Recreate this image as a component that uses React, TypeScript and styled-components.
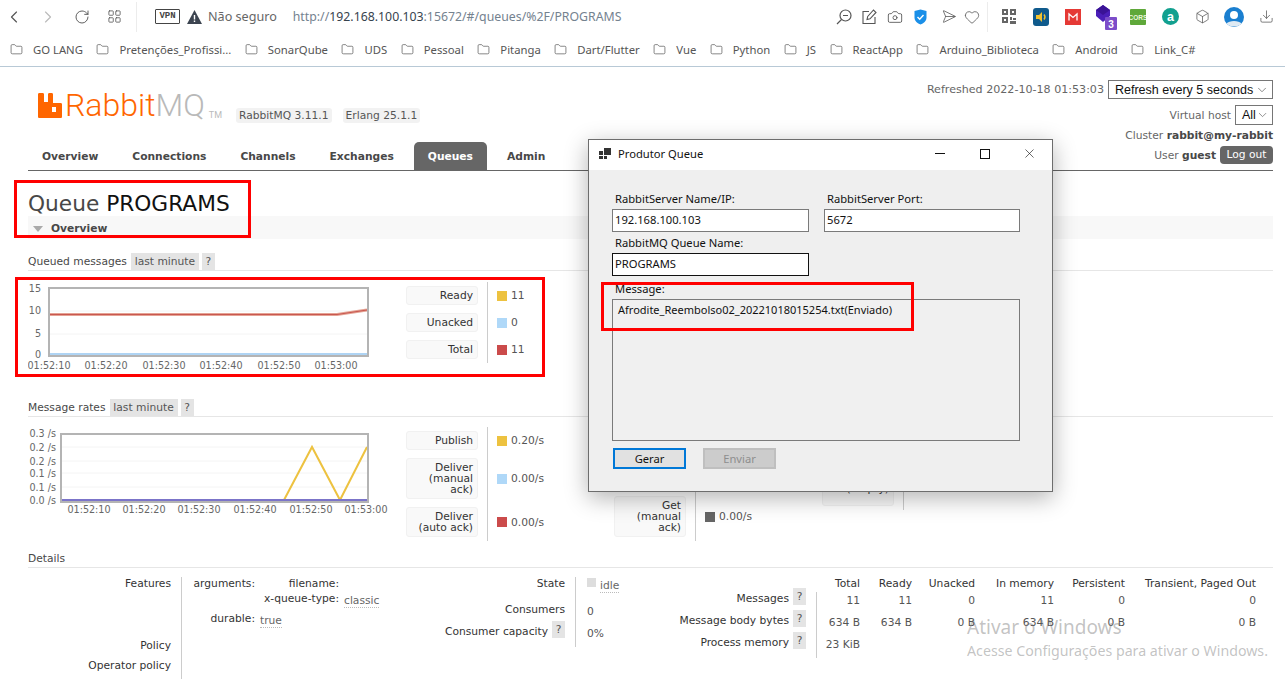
import React from 'react'
import styled, { createGlobalStyle } from 'styled-components'
import {
  Box,
  Camera,
  ChevronDown,
  ChevronLeft,
  ChevronRight,
  Download,
  Folder,
  Heart,
  LayoutGrid,
  RotateCw,
  Send,
  X,
} from 'lucide-react'

const GlobalStyle = createGlobalStyle`
  html, body {
    margin: 0;
    height: 680px;
    overflow: hidden;
    background: #fff;
  }
  * { box-sizing: border-box; }
`

const verdana = `"DejaVu Sans", Verdana, sans-serif`
const segoe = `"Noto Sans", "Open Sans", sans-serif`

const Page = styled.div`
  position: relative;
  width: 1285px;
  height: 680px;
  overflow: hidden;
  font-family: ${verdana};
  font-size: 10.7px;
  color: #484848;
`

/* browser chrome */
const TopBar = styled.div`
  display: flex;
  align-items: center;
  height: 33px;
  font-family: ${segoe};
  color: #555;
`
const ToolSlot = styled.div<{ $w: number }>`
  display: flex;
  align-items: center;
  justify-content: center;
  flex: 0 0 ${(p) => p.$w}px;
  height: 33px;
`
const Separator = styled.div<{ $l: number; $r: number }>`
  width: 1px;
  height: 30px;
  background: #ececec;
  margin: 0 ${(p) => p.$r}px 0 ${(p) => p.$l}px;
`
const VpnBadge = styled.div`
  width: 25px;
  height: 15px;
  border: 1px solid #444;
  border-radius: 1px;
  font: 9px/13px "Liberation Mono", monospace;
  font-weight: 700;
  text-align: center;
  color: #444;
  margin-right: 7px;
`
const NotSecure = styled.span`
  font-size: 12.6px;
  color: #666;
  margin-left: 6px;
  margin-right: 16px;
`
const Url = styled.div`
  font-size: 12.3px;
  color: #74828f;
  white-space: nowrap;
  b { font-weight: 400; color: #36424d; }
`
const ToolIcons = styled.div`
  display: flex;
  align-items: center;
  margin-left: auto;
  padding-right: 3px;
`
const Bookmarks = styled.div`
  display: flex;
  align-items: center;
  gap: 13.5px;
  height: 34px;
  padding-left: 10px;
  border-bottom: 1px solid #b8c9d6;
  font-family: ${segoe};
  font-size: 11.3px;
  color: #555;
`
const Bookmark = styled.div`
  display: flex;
  align-items: center;
  gap: 10px;
  white-space: nowrap;
  svg { flex: none; }
`

/* rabbit header */
const Header = styled.header`
  display: flex;
  justify-content: space-between;
  height: 104px;
  margin: 0 12px 0 28px;
  border-bottom: 1px solid #666;
`
const Brand = styled.div`
  display: flex;
  flex-direction: column;
  padding-top: 26px;
`
const LogoRow = styled.div`
  display: flex;
  align-items: flex-start;
  height: 49px;
  padding-left: 10px;
`
const LogoMark = styled.svg`
  width: 24px;
  height: 25px;
  margin-right: 3px;
`
const LogoWord = styled.div`
  font-family: Roboto, sans-serif;
  font-weight: 300;
  font-size: 32px;
  line-height: 25px;
  color: #f60;
  span { color: #b9b9b9; }
`
const LogoTm = styled.div`
  font-family: Roboto, sans-serif;
  font-size: 9px;
  color: #bbb;
  margin: 17px 14px 0 4px;
`
const Version = styled.div`
  height: 15px;
  margin-top: 15px;
  margin-right: 11px;
  padding: 0 3px;
  background: #f2f2f2;
  border-radius: 3px;
  line-height: 15px;
  white-space: nowrap;
  color: #555;
`
const Tabs = styled.nav`
  display: flex;
  gap: 6px;
  height: 28px;
`
const Tab = styled.div<{ $active?: boolean }>`
  padding: 0 14px;
  line-height: 30px;
  font-weight: 700;
  border-radius: 5px 5px 0 0;
  background: ${(p) => (p.$active ? '#666' : 'transparent')};
  color: ${(p) => (p.$active ? '#fff' : '#484848')};
`
const Status = styled.div`
  display: flex;
  flex-direction: column;
  align-items: flex-end;
  padding-top: 13px;
`
const StatusRow = styled.div<{ $top?: number }>`
  display: flex;
  align-items: center;
  justify-content: flex-end;
  gap: 4px;
  margin-top: ${(p) => p.$top ?? 0}px;
  white-space: nowrap;
  color: #666;
  b { color: #484848; }
`
const Refreshed = styled.span`
  font-size: 11.1px;
`
const SelectBox = styled.div<{ $w: number }>`
  display: flex;
  align-items: center;
  justify-content: space-between;
  width: ${(p) => p.$w}px;
  height: ${(p) => (p.$w > 100 ? 19 : 20)}px;
  padding: 0 3px 0 6px;
  border: 1px solid #767676;
  font-family: "Liberation Sans", sans-serif;
  font-size: 12.5px;
  color: #111;
`
const LogOut = styled.div`
  width: 53px;
  height: 18px;
  line-height: 18px;
  text-align: center;
  background: #666;
  color: #fff;
  border-radius: 4px;
`

/* queue page */
const Main = styled.main`
  margin: 0 12px 0 28px;
`
const Title = styled.h1`
  margin: 0;
  height: 45px;
  padding-top: 20px;
  font-size: 21.7px;
  font-weight: 400;
  line-height: 26px;
  color: #484848;
  b { font-weight: 400; color: #111; }
`
const SectionBar = styled.div`
  display: flex;
  align-items: center;
  gap: 8px;
  height: 23px;
  padding: 2px 0 0 5px;
  background: #f8f8f8;
  font-weight: 700;
  color: #484848;
`
const Caret = styled.i`
  width: 0;
  height: 0;
  border-left: 5px solid transparent;
  border-right: 5px solid transparent;
  border-top: 6px solid #aaa;
`
const SubHeading = styled.div<{ $top: number }>`
  display: flex;
  align-items: center;
  gap: 3px;
  height: 18px;
  margin-top: ${(p) => p.$top}px;
  border-bottom: 1px solid #e6e6e6;
  padding-bottom: 1px;
  white-space: nowrap;
`
const Help = styled.span`
  display: inline-block;
  height: 17px;
  min-width: 13px;
  padding: 0 3px;
  line-height: 17px;
  text-align: center;
  background: #e4e4e4;
  color: #555;
`
const Range = styled(Help)`
  width: 68px;
  padding: 0;
  margin-left: 1px;
`
const ChartRow = styled.div<{ $h: number; $top: number }>`
  display: flex;
  height: ${(p) => p.$h}px;
  margin-top: ${(p) => p.$top}px;
`
const Plot = styled.svg`
  flex: 0 0 378px;
  height: 114px;
  font-family: ${verdana};
  font-size: 9.6px;
  fill: #666;
`
const LegendCol = styled.div<{ $pad?: number }>`
  display: flex;
  flex-direction: column;
  flex: 0 0 208px;
  padding-top: ${(p) => p.$pad ?? 0}px;
`
const LegendRow = styled.div`
  display: flex;
`
const LegendLabel = styled.div<{ $tail?: number }>`
  width: 72px;
  margin: 4px 0;
  padding: 3px 4px ${(p) => p.$tail ?? 3}px;
  line-height: 11px;
  text-align: right;
  background: #f9f9f9;
  border: 1px solid #f1f1f1;
  border-radius: 3px;
  color: #333;
`
const LegendValue = styled.div`
  display: flex;
  align-items: center;
  gap: 4px;
  margin-left: 9px;
  padding-left: 9px;
  border-left: 1px solid #ccc;
  color: #555;
`
const Swatch = styled.i<{ $c: string }>`
  width: 10px;
  height: 10px;
  background: ${(p) => p.$c};
`

/* details */
const DetailsRow = styled.div`
  display: flex;
  margin-top: 9px;
`
const DetailBlock = styled.div<{ $w: number; $label: number; $top?: number }>`
  display: grid;
  grid-template-columns: ${(p) => p.$label}px 1fr;
  align-content: start;
  flex: 0 0 ${(p) => p.$w}px;
  margin-top: ${(p) => p.$top ?? 0}px;
`
const DetailLabel = styled.div<{ $h: number; $row?: number }>`
  display: flex;
  justify-content: flex-end;
  align-items: flex-start;
  gap: 4px;
  height: ${(p) => p.$h}px;
  padding: 0 10px 0 0;
  color: #333;
  white-space: nowrap;
  grid-row: ${(p) => p.$row ?? 'auto'};
  span { margin-top: -4px; }
`
const DetailValue = styled.div<{ $top?: number }>`
  border-left: 1px solid #ccc;
  padding: ${(p) => p.$top ?? 0}px 0 0 11px;
  color: #555;
`
const CountsCell = styled.div`
  grid-row: 1 / 4;
  grid-column: 2;
  border-left: 1px solid #ccc;
  color: #555;
`
const KeyValues = styled.dl<{ $key: number }>`
  display: grid;
  grid-template-columns: ${(p) => p.$key}px 1fr;
  column-gap: 5px;
  align-items: baseline;
  margin: 0;
  dd { margin: 0; }
`
const Key = styled.dt<{ $top?: number }>`
  margin-top: ${(p) => p.$top ?? 0}px;
  text-align: right;
  color: #333;
  white-space: nowrap;
`
const Val = styled.dd<{ $top?: number }>`
  margin-top: ${(p) => p.$top ?? 0}px !important;
`
const Dotted = styled.span`
  position: relative;
  top: 2px;
  border-bottom: 1px dotted #bbb;
  color: #666;
`
const IdleSwatch = styled.i`
  display: inline-block;
  width: 9px;
  height: 9px;
  margin-right: 4px;
  background: #ddd;
`
const CountTable = styled.div`
  display: grid;
  grid-template-columns: 43px 52px 63px 79px 71px 131px;
  margin-top: -15px;
  text-align: right;
  white-space: nowrap;
`
const CountHead = styled.div`
  height: 15px;
  color: #333;
`
const CountCell = styled.div`
  height: 22px;
  padding-top: 2px;
  color: #555;
`

/* the desktop window over the browser */
const AppWindow = styled.section`
  position: absolute;
  left: 588px;
  top: 139px;
  width: 465px;
  height: 353px;
  border: 1px solid #6d6d6d;
  background: #efefef;
  box-shadow: 0 6px 22px rgba(0, 0, 0, 0.3);
  font-family: ${segoe};
  font-size: 11.2px;
  color: #111;
`
const WindowTitle = styled.div`
  display: flex;
  align-items: center;
  height: 30px;
  padding-left: 10px;
  padding-bottom: 3px;
  background: #fff;
  gap: 7px;
`
const WindowButtons = styled.div`
  display: flex;
  align-items: center;
  margin-left: auto;
`
const WindowButton = styled.div`
  display: flex;
  align-items: center;
  justify-content: center;
  width: 45px;
  height: 27px;
`
const MinLine = styled.i`
  width: 10px;
  height: 1px;
  background: #111;
`
const MaxBox = styled.i`
  width: 10px;
  height: 10px;
  border: 1px solid #111;
`
const WindowBody = styled.div`
  display: grid;
  grid-template-columns: 197px 196px;
  column-gap: 15px;
  padding: 21px 0 0 23px;
`
const FieldLabel = styled.div<{ $wide?: boolean }>`
  grid-column: ${(p) => (p.$wide ? '1 / 3' : 'auto')};
  height: ${(p) => (p.$wide ? 20 : 18)}px;
  padding: ${(p) => (p.$wide ? 2 : 0)}px 0 0 3px;
  line-height: 16px;
`
const Field = styled.div<{ $focus?: boolean }>`
  height: 23px;
  margin-bottom: 3px;
  padding-left: 2px;
  line-height: 20px;
  background: #fff;
  border: 1px solid ${(p) => (p.$focus ? '#111' : '#7a7a7a')};
`
const MessageBox = styled.div`
  grid-column: 1 / 3;
  height: 142px;
  padding: 2px 5px;
  font-size: 11px;
  line-height: 16px;
  border: 1px solid #7a7a7a;
  background: #f0f0f0;
`
const WindowActions = styled.div`
  grid-column: 1 / 3;
  display: flex;
  gap: 17px;
  margin: 7px 0 0 1px;
`
const Push = styled.div<{ $disabled?: boolean }>`
  width: 73px;
  height: 21px;
  line-height: 17px;
  text-align: center;
  background: ${(p) => (p.$disabled ? '#ccc' : '#e1e1e1')};
  border: 2px solid ${(p) => (p.$disabled ? '#bfbfbf' : '#0078d7')};
  color: ${(p) => (p.$disabled ? '#8e8e8e' : '#111')};
`

/* overlays */
const Callout = styled.div<{ $l: number; $t: number; $w: number; $h: number }>`
  position: absolute;
  left: ${(p) => p.$l}px;
  top: ${(p) => p.$t}px;
  width: ${(p) => p.$w}px;
  height: ${(p) => p.$h}px;
  border: 3px solid #f00;
`
const Watermark = styled.div`
  position: absolute;
  left: 967px;
  top: 616px;
  font-family: ${segoe};
  color: rgba(110, 110, 110, 0.42);
  white-space: nowrap;
  p { margin: 3px 0 0; font-size: 14.2px; line-height: 20px; }
  h2 { margin: 0; font-size: 19px; line-height: 22px; font-weight: 400; }
`

const Gray = '#555'

function SearchMinus() {
  return (
    <svg width="16" height="16" viewBox="0 0 16 16" fill="none" stroke={Gray} strokeWidth="1.2">
      <circle cx="9.5" cy="6.5" r="5.5" />
      <path d="M5.5 10.5 1 15M7 6.5h5" />
    </svg>
  )
}

function PenBox() {
  return (
    <svg width="15" height="15" viewBox="0 0 15 15" fill="none" stroke={Gray} strokeWidth="1.1">
      <path d="M7 2.5H1v12h12V8" />
      <path d="m5 10.5.7-3L11.5 1l2.5 2.5-6 6.3-3 .7Z" />
    </svg>
  )
}

function ShieldCheck() {
  return (
    <svg width="13" height="16" viewBox="0 0 13 16">
      <path d="M6.500.5 12.500 2v6.500c0 3.500-3 6-6 7-3-1-6-3.500-6-7V2Z" fill="#1a8fe8" />
      <path d="m3.500 8 2.200 2.200L9.500 6" fill="none" stroke="#fff" strokeWidth="1.4" />
    </svg>
  )
}

function QrTile() {
  return (
    <svg width="14" height="16" viewBox="0 0 14 16" fill="#666">
      <path d="M0 0h6v6H0zM2 2v2h2V2zM8 0h6v6H8zm2 2v2h2V2zM0 8h6v6H0zm2 2v2h2v-2zM8 8h2v3H8zM11 9h3v2h-3zM8 12h6v3H8z" fillRule="evenodd" />
    </svg>
  )
}

function SpeakerTile() {
  return (
    <svg width="16" height="18" viewBox="0 0 16 18">
      <rect width="16" height="18" rx="3" fill="#0f5a8c" />
      <path d="M3 7h3l3-3v10l-3-3H3Z" fill="#f2c230" />
      <path d="M11 6.500c1.200 1.500 1.200 3.500 0 5" fill="none" stroke="#f2c230" strokeWidth="1.400" />
    </svg>
  )
}

function MailTile() {
  return (
    <svg width="16" height="16" viewBox="0 0 16 16">
      <rect width="16" height="16" fill="#e53935" />
      <path d="M4 11.500V5l4 3.500L12 5v6.500" fill="none" stroke="#fff" strokeWidth="1.300" />
    </svg>
  )
}

function GemBadge() {
  return (
    <svg width="22" height="26" viewBox="0 0 22 26">
      <path d="M8 1 15 6v6l-7 6-7-6V6Z" fill="#4b1fb8" />
      <path d="M8 1 1 6l7 5 7-5Z" fill="#3a1396" />
      <rect x="10" y="13" width="12" height="13" rx="1" fill="#7c4dc9" />
      <text x="16" y="23.500" textAnchor="middle" fontSize="10" fontWeight="700" fill="#fff" fontFamily="Liberation Sans">3</text>
    </svg>
  )
}

function CorsTile() {
  return (
    <svg width="16" height="16" viewBox="0 0 16 16">
      <rect width="16" height="16" rx="1" fill="#5fa83a" />
      <text x="8" y="10.500" textAnchor="middle" fontSize="6.500" fontWeight="700" fill="#e9f5dc" fontFamily="Liberation Sans">CORS</text>
    </svg>
  )
}

function LetterCircle() {
  return (
    <svg width="17" height="17" viewBox="0 0 17 17">
      <circle cx="8.500" cy="8.500" r="8.500" fill="#12a08f" />
      <text x="8.500" y="12.800" textAnchor="middle" fontSize="12.500" fontWeight="700" fill="#fff" fontFamily="Liberation Sans">a</text>
    </svg>
  )
}

function Avatar() {
  return (
    <svg width="20" height="20" viewBox="0 0 20 20">
      <circle cx="10" cy="10" r="10" fill="#1a7fd0" />
      <circle cx="10" cy="8" r="4" fill="#fff" />
      <path d="M2.500 16.500C5 13 15 13 17.500 16.500 15 20.500 5 20.500 2.500 16.500Z" fill="#dfeaf3" />
    </svg>
  )
}

function FormIcon() {
  return (
    <svg width="12" height="11" viewBox="0 0 12 11" fill="#333">
      <path d="M5 0h7v7H5zM0 3h4v4H0zM0 8h4v3H0zM5 8h3v3H5z" />
    </svg>
  )
}

const bookmarks = [
  'GO LANG',
  'Pretenções_Profissi...',
  'SonarQube',
  'UDS',
  'Pessoal',
  'Pitanga',
  'Dart/Flutter',
  'Vue',
  'Python',
  'JS',
  'ReactApp',
  'Arduino_Biblioteca',
  'Android',
  'Link_C#',
]

const tabs = ['Overview', 'Connections', 'Channels', 'Exchanges', 'Queues', 'Admin']

const countHeads = ['Total', 'Ready', 'Unacked', 'In memory', 'Persistent', 'Transient, Paged Out']
const countValues = ['11', '11', '0', '11', '0', '0', '634 B', '634 B', '0 B', '634 B', '0 B', '0 B', '23 KiB']

interface Series {
  color: string
  width: number
  points: [number, number][]
}

interface ChartProps {
  x0: number
  y0: number
  x1: number
  y1: number
  yLabels: { text: string; y: number }[]
  yRight: number
  xLabels: { text: string; x: number }[]
  xLabelY: number
  grid: number[]
  series: Series[]
}

// all coordinates are local to the 378px wide plot, which starts at x=28
function Chart({ x0, y0, x1, y1, yLabels, yRight, xLabels, xLabelY, grid, series }: ChartProps) {
  return (
    <Plot viewBox="0 0 378 114">
      {yLabels.map((l) => (
        <text key={l.text + l.y} x={yRight} y={l.y} textAnchor="end">
          {l.text}
        </text>
      ))}
      {grid.map((y) => (
        <line key={y} x1={x0} x2={x1} y1={y} y2={y} stroke="#f4f4f4" />
      ))}
      {series.map((s) => (
        <polyline
          key={s.color}
          points={s.points.map((p) => p.join(',')).join(' ')}
          fill="none"
          stroke={s.color}
          strokeWidth={s.width}
        />
      ))}
      <rect x={x0} y={y0} width={x1 - x0} height={y1 - y0} fill="none" stroke="#b4b4b4" strokeWidth="2" />
      {xLabels.map((l) => (
        <text key={l.text} x={l.x} y={xLabelY} textAnchor="middle">
          {l.text}
        </text>
      ))}
    </Plot>
  )
}

export default function App() {
  return (
    <Page>
      <GlobalStyle />
      <TopBar>
        <ToolSlot $w={28}><ChevronLeft size={20} color="#555" strokeWidth={1.4} /></ToolSlot>
        <ToolSlot $w={40}><ChevronRight size={20} color="#bbb" strokeWidth={1.4} /></ToolSlot>
        <ToolSlot $w={28}><RotateCw size={16} color="#555" strokeWidth={1.4} /></ToolSlot>
        <ToolSlot $w={36}><LayoutGrid size={15} color="#555" strokeWidth={1.3} /></ToolSlot>
        <Separator $l={4} $r={18} />
        <VpnBadge>VPN</VpnBadge>
        <svg width="15" height="14" viewBox="0 0 15 14">
          <path d="M7.500 0 15 14H0Z" fill="#3c4450" />
          <path d="M6.800 5h1.400v4.500H6.800zM6.800 10.500h1.400V12H6.800z" fill="#fff" />
        </svg>
        <NotSecure>Não seguro</NotSecure>
        <Url>http://<b>192.168.100.103</b>:15672/#/queues/%2F/PROGRAMS</Url>
        <ToolIcons>
          <ToolSlot $w={27}><SearchMinus /></ToolSlot>
          <ToolSlot $w={25}><PenBox /></ToolSlot>
          <ToolSlot $w={26}><Camera size={16} color="#555" strokeWidth={1.3} /></ToolSlot>
          <ToolSlot $w={25}><ShieldCheck /></ToolSlot>
          <ToolSlot $w={26}><Send size={15} color="#555" strokeWidth={1.2} style={{ transform: 'rotate(45deg)' }} /></ToolSlot>
          <ToolSlot $w={26}><Heart size={16} color="#555" strokeWidth={1.2} /></ToolSlot>
          <Separator $l={2} $r={5} />
          <ToolSlot $w={32}><QrTile /></ToolSlot>
          <ToolSlot $w={32}><SpeakerTile /></ToolSlot>
          <ToolSlot $w={32}><MailTile /></ToolSlot>
          <ToolSlot $w={33}><GemBadge /></ToolSlot>
          <ToolSlot $w={32}><CorsTile /></ToolSlot>
          <ToolSlot $w={32}><LetterCircle /></ToolSlot>
          <ToolSlot $w={32}><Box size={15} color="#555" strokeWidth={1.2} /></ToolSlot>
          <ToolSlot $w={32}><Avatar /></ToolSlot>
          <ToolSlot $w={32}><Download size={15} color="#555" strokeWidth={1.2} /></ToolSlot>
        </ToolIcons>
      </TopBar>
      <Bookmarks>
        {bookmarks.map((b) => (
          <Bookmark key={b}>
            <Folder size={13} color="#555" strokeWidth={1.3} />
            {b}
          </Bookmark>
        ))}
      </Bookmarks>

      <Header>
        <Brand>
          <LogoRow>
            <LogoMark viewBox="0 0 24 25">
              <path
                fillRule="evenodd"
                fill="#f60"
                d="M0 1.500C0 .5.500 0 1.500 0h3C5.500 0 6 .5 6 1.500V9h4V1.500C10 .5 10.500 0 11.500 0h2c1 0 1.500.5 1.500 1.500V10h7.500c1 0 1.500.5 1.500 1.500v12c0 1-.5 1.500-1.500 1.500h-21C.5 25 0 24.500 0 23.500ZM14 14v5h4v-5Z"
              />
            </LogoMark>
            <LogoWord>Rabbit<span>MQ</span></LogoWord>
            <LogoTm>TM</LogoTm>
            <Version>RabbitMQ 3.11.1</Version>
            <Version>Erlang 25.1.1</Version>
          </LogoRow>
          <Tabs>
            {tabs.map((t) => (
              <Tab key={t} $active={t === 'Queues'}>{t}</Tab>
            ))}
          </Tabs>
        </Brand>
        <Status>
          <StatusRow>
            <Refreshed>Refreshed 2022-10-18 01:53:03</Refreshed>
            <SelectBox $w={165}>Refresh every 5 seconds<ChevronDown size={14} color="#666" strokeWidth={1.3} /></SelectBox>
          </StatusRow>
          <StatusRow $top={6}>
            Virtual host
            <SelectBox $w={38}>All<ChevronDown size={14} color="#666" strokeWidth={1.3} /></SelectBox>
          </StatusRow>
          <StatusRow $top={4}>
            <span>Cluster <b>rabbit@my-rabbit</b></span>
          </StatusRow>
          <StatusRow $top={4}>
            <span>User <b>guest</b></span>
            <LogOut>Log out</LogOut>
          </StatusRow>
        </Status>
      </Header>

      <Main>
        <Title>Queue <b>PROGRAMS</b></Title>
        <SectionBar><Caret />Overview</SectionBar>

        <SubHeading $top={14}>
          Queued messages <Range>last minute</Range> <Help>?</Help>
        </SubHeading>
        <ChartRow $h={98} $top={10}>
          <Chart
            x0={21}
            y0={7}
            x1={340}
            y1={75}
            yRight={13}
            yLabels={[
              { text: '15', y: 11 },
              { text: '10', y: 33 },
              { text: '5', y: 56 },
              { text: '0', y: 77 },
            ]}
            xLabelY={88}
            xLabels={[
              { text: '01:52:10', x: 21 },
              { text: '01:52:20', x: 78 },
              { text: '01:52:30', x: 136 },
              { text: '01:52:40', x: 193 },
              { text: '01:52:50', x: 251 },
              { text: '01:53:00', x: 308 },
            ]}
            grid={[30, 53]}
            series={[
              { color: '#afd4f4', width: 3, points: [[22, 73.5], [339, 73.5]] },
              { color: '#e4a293', width: 3, points: [[22, 33.500], [309, 33.500], [339, 29]] },
              { color: '#c9574f', width: 1, points: [[22, 33.500], [309, 33.500], [339, 29]] },
            ]}
          />
          <LegendCol $pad={1}>
            <LegendRow>
              <LegendLabel>Ready</LegendLabel>
              <LegendValue><Swatch $c="#edc240" />11</LegendValue>
            </LegendRow>
            <LegendRow>
              <LegendLabel>Unacked</LegendLabel>
              <LegendValue><Swatch $c="#afd8f8" />0</LegendValue>
            </LegendRow>
            <LegendRow>
              <LegendLabel>Total</LegendLabel>
              <LegendValue><Swatch $c="#cb4b4b" />11</LegendValue>
            </LegendRow>
          </LegendCol>
        </ChartRow>

        <SubHeading $top={20}>
          Message rates <Range>last minute</Range> <Help>?</Help>
        </SubHeading>
        <ChartRow $h={114} $top={10}>
          <Chart
            x0={33}
            y0={7}
            x1={340}
            y1={75}
            yRight={28}
            yLabels={[
              { text: '0.3 /s', y: 10 },
              { text: '0.2 /s', y: 24 },
              { text: '0.2 /s', y: 38 },
              { text: '0.1 /s', y: 50 },
              { text: '0.1 /s', y: 64 },
              { text: '0.0 /s', y: 77 },
            ]}
            xLabelY={86}
            xLabels={[
              { text: '01:52:10', x: 61 },
              { text: '01:52:20', x: 116 },
              { text: '01:52:30', x: 171 },
              { text: '01:52:40', x: 227 },
              { text: '01:52:50', x: 283 },
              { text: '01:53:00', x: 338 },
            ]}
            grid={[20, 34, 46, 60]}
            series={[
              { color: '#edc240', width: 2, points: [[256, 73], [284, 20], [312, 73], [339, 20]] },
              { color: '#7b74c9', width: 3, points: [[34, 73.5], [339, 73.5]] },
            ]}
          />
          <LegendCol>
            <LegendRow>
              <LegendLabel>Publish</LegendLabel>
              <LegendValue><Swatch $c="#edc240" />0.20/s</LegendValue>
            </LegendRow>
            <LegendRow>
              <LegendLabel>Deliver (manual ack)</LegendLabel>
              <LegendValue><Swatch $c="#afd8f8" />0.00/s</LegendValue>
            </LegendRow>
            <LegendRow>
              <LegendLabel>Deliver (auto ack)</LegendLabel>
              <LegendValue><Swatch $c="#cb4b4b" />0.00/s</LegendValue>
            </LegendRow>
          </LegendCol>
          <LegendCol $pad={65}>
            <LegendRow>
              <LegendLabel>Get (manual ack)</LegendLabel>
              <LegendValue><Swatch $c="#666" />0.00/s</LegendValue>
            </LegendRow>
          </LegendCol>
          <LegendCol $pad={37}>
            <LegendRow>
              <LegendLabel $tail={11}>Get (empty)</LegendLabel>
              <LegendValue />
            </LegendRow>
          </LegendCol>
        </ChartRow>

        <SubHeading $top={9}>Details</SubHeading>
        <DetailsRow>
          <DetailBlock $w={412} $label={153}>
            <DetailLabel $h={62}>Features</DetailLabel>
            <DetailValue>
              <KeyValues $key={62}>
                <Key>arguments:</Key>
                <dd>
                  <KeyValues $key={79}>
                    <Key>filename:</Key>
                    <dd />
                    <Key $top={2}>x-queue-type:</Key>
                    <Val $top={2}><Dotted>classic</Dotted></Val>
                  </KeyValues>
                </dd>
                <Key $top={7}>durable:</Key>
                <Val $top={7}><Dotted>true</Dotted></Val>
              </KeyValues>
            </DetailValue>
            <DetailLabel $h={20}>Policy</DetailLabel>
            <DetailValue />
            <DetailLabel $h={20}>Operator policy</DetailLabel>
            <DetailValue />
          </DetailBlock>
          <DetailBlock $w={220} $label={135}>
            <DetailLabel $h={26}>State</DetailLabel>
            <DetailValue><IdleSwatch /><Dotted>idle</Dotted></DetailValue>
            <DetailLabel $h={22}>Consumers</DetailLabel>
            <DetailValue $top={2}>0</DetailValue>
            <DetailLabel $h={22}>Consumer capacity <Help>?</Help></DetailLabel>
            <DetailValue $top={2}>0%</DetailValue>
          </DetailBlock>
          <DetailBlock $w={593} $label={156} $top={15}>
            <DetailLabel $h={22}>Messages <Help>?</Help></DetailLabel>
            <CountsCell>
              <CountTable>
                {countHeads.map((h) => (
                  <CountHead key={h}>{h}</CountHead>
                ))}
                {countValues.map((v, i) => (
                  <CountCell key={i}>{v}</CountCell>
                ))}
              </CountTable>
            </CountsCell>
            <DetailLabel $h={22} $row={2}>Message body bytes <Help>?</Help></DetailLabel>
            <DetailLabel $h={22} $row={3}>Process memory <Help>?</Help></DetailLabel>
          </DetailBlock>
        </DetailsRow>
      </Main>

      <AppWindow>
        <WindowTitle>
          <FormIcon />
          Produtor Queue
          <WindowButtons>
            <WindowButton><MinLine /></WindowButton>
            <WindowButton><MaxBox /></WindowButton>
            <WindowButton><X size={15} color="#111" strokeWidth={1} /></WindowButton>
          </WindowButtons>
        </WindowTitle>
        <WindowBody>
          <FieldLabel>RabbitServer Name/IP:</FieldLabel>
          <FieldLabel>RabbitServer Port:</FieldLabel>
          <Field>192.168.100.103</Field>
          <Field>5672</Field>
          <FieldLabel>RabbitMQ Queue Name:</FieldLabel>
          <div />
          <Field $focus>PROGRAMS</Field>
          <div />
          <FieldLabel $wide>Message:</FieldLabel>
          <MessageBox>Afrodite_Reembolso02_20221018015254.txt(Enviado)</MessageBox>
          <WindowActions>
            <Push>Gerar</Push>
            <Push $disabled>Enviar</Push>
          </WindowActions>
        </WindowBody>
      </AppWindow>

      <Callout $l={14} $t={180} $w={237} $h={58} />
      <Callout $l={15} $t={277} $w={530} $h={100} />
      <Callout $l={601} $t={282} $w={313} $h={49} />

      <Watermark>
        <h2>Ativar o Windows</h2>
        <p>Acesse Configurações para ativar o Windows.</p>
      </Watermark>
    </Page>
  )
}
